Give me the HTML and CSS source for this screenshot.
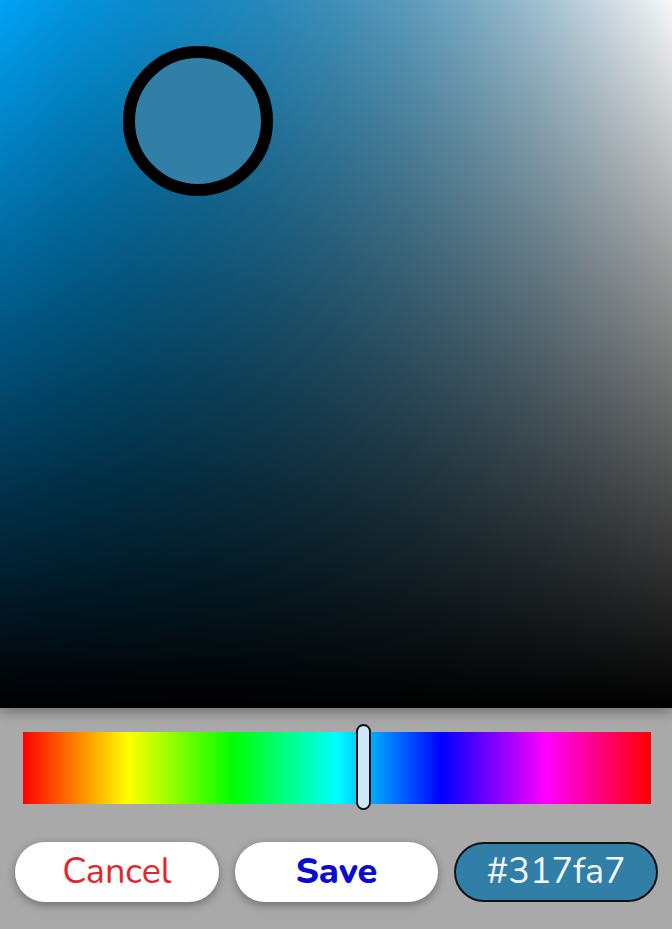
FILE: index.html
```html
<!DOCTYPE html>
<html>
<head>
<meta charset="utf-8">
<link rel="stylesheet" href="styles.css">
</head>
<body>
<div class="picker">
  <div class="sv">
    <div class="sv-white"></div>
    <div class="sv-black"></div>
    <div class="handle"></div>
  </div>
  <div class="controls">
    <div class="hue">
      <div class="hue-thumb"></div>
    </div>
    <div class="buttons">
      <button class="btn cancel">Cancel</button>
      <button class="btn save">Save</button>
      <div class="btn hex">#317fa7</div>
    </div>
  </div>
</div>
</body>
</html>
```
FILE: styles.css
```css
html, body {
  margin: 0;
  padding: 0;
  background: #a9a9a9;
}
.picker {
  width: 672px;
  height: 929px;
  display: flex;
  flex-direction: column;
  background: #a9a9a9;
  font-family: "Nunito", "Lato", "Open Sans", sans-serif;
}
.sv {
  position: relative;
  width: 672px;
  height: 708px;
  background: #00a8fc;
  box-shadow: 0 2px 14px rgba(0,0,0,0.45);
  z-index: 1;
}
.sv-white {
  position: absolute;
  inset: 0;
  background: linear-gradient(to right,
    rgba(0,0,0,0) 0%,
    rgba(26,26,26,0.1) 10%,
    rgba(51,51,51,0.2) 20%,
    rgba(77,77,77,0.3) 30%,
    rgba(102,102,102,0.4) 40%,
    rgba(128,128,128,0.5) 50%,
    rgba(153,153,153,0.6) 60%,
    rgba(179,179,179,0.7) 70%,
    rgba(204,204,204,0.8) 80%,
    rgba(230,230,230,0.9) 90%,
    rgba(255,255,255,1) 100%);
}
.sv-black {
  position: absolute;
  inset: 0;
  background: linear-gradient(to bottom, rgba(0,0,0,0.03), #000);
}
.handle {
  position: absolute;
  left: 123px;
  top: 46px;
  width: 126px;
  height: 126px;
  border: 12px solid #000;
  border-radius: 50%;
  background: #317fa7;
}
.controls {
  flex: 1;
  display: flex;
  flex-direction: column;
  padding: 24px 0 0 0;
}
.hue {
  position: relative;
  margin: 0 21px 0 23px;
  height: 72px;
  background: linear-gradient(to right,
    #ff0000 0%, #ffff00 16.67%, #00ff00 33.33%, #00ffff 50%,
    #0000ff 66.67%, #ff00ff 83.33%, #ff0000 100%);
}
.hue-thumb {
  position: absolute;
  left: 333px;
  top: -8px;
  width: 11px;
  height: 82px;
  border: 2px solid #111;
  border-radius: 8px;
  background: #cde8f8;
}
.buttons {
  display: flex;
  gap: 16px;
  padding: 38px 14px 0 15px;
}
.btn {
  box-sizing: border-box;
  width: 204px;
  height: 60px;
  border-radius: 30px;
  border: none;
  background: #fff;
  display: flex;
  align-items: center;
  justify-content: center;
  font-family: "Nunito", "Lato", "Open Sans", sans-serif;
  font-size: 36px;
  padding: 0 0 2px 0;
  box-shadow: 0 3px 10px rgba(0,0,0,0.35);
}
.cancel {
  color: #e3262b;
  font-weight: 400;
}
.save {
  color: #0a0ad2;
  font-weight: 800;
}
.hex {
  background: #317fa7;
  border: 2px solid #111;
  color: #f2f6f8;
  box-shadow: none;
  font-weight: 400;
}
```
